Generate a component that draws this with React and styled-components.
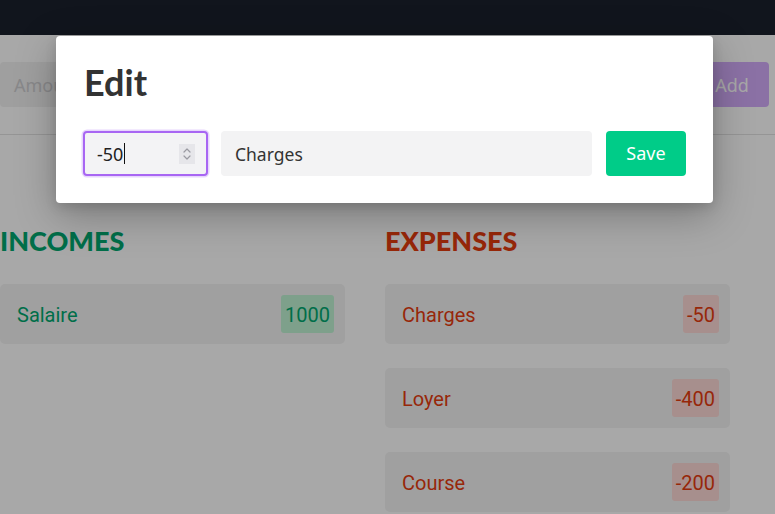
import React from "react";
import styled, { createGlobalStyle } from "styled-components";

const GlobalStyle = createGlobalStyle`
  html, body {
    margin: 0;
    padding: 0;
    background: #ffffff;
    overflow: hidden;
    font-family: "Noto Sans", "Open Sans", sans-serif;
  }
  * { box-sizing: border-box; }
`;

const Page = styled.div`
  width: 775px;
  height: 514px;
  position: relative;
  overflow: hidden;
`;

const Header = styled.header`
  height: 35px;
  background: #1a202c;
`;

const FormBar = styled.div`
  display: flex;
  gap: 13px;
  padding: 27px 6px 27px 0;
  border-bottom: 1px solid #e3e3e3;
`;

const Field = styled.div`
  height: 45px;
  border-radius: 4px;
  background: #f1f1f1;
  display: flex;
  align-items: center;
  padding: 0 14px;
  font-size: 18px;
  color: ${(p) => (p.$placeholder ? "#cfcfd2" : "#333")};
  flex: ${(p) => p.$flex || "none"};
  width: ${(p) => p.$width || "auto"};
`;

const AddButton = styled.button`
  height: 45px;
  width: 74px;
  border: none;
  border-radius: 4px;
  background: #d3acfb;
  color: #ffffff;
  font-family: "Noto Sans", sans-serif;
  font-size: 18px;
  padding: 0;
`;

const Columns = styled.div`
  display: grid;
  grid-template-columns: 345px 345px;
  column-gap: 40px;
  padding-top: 90px;
`;

const Column = styled.section`
  display: flex;
  flex-direction: column;
`;

const Heading = styled.h2`
  margin: 0 0 27px;
  font-family: Lato, sans-serif;
  font-weight: 900;
  font-size: 27px;
  line-height: 32px;
  color: ${(p) => p.$color};
`;

const List = styled.div`
  display: flex;
  flex-direction: column;
  gap: 24px;
`;

const Card = styled.div`
  height: 60px;
  border-radius: 5px;
  background: #f3f3f3;
  display: flex;
  align-items: center;
  justify-content: space-between;
  padding: 2px 11px 0 17px;
  font-family: Roboto, sans-serif;
  font-size: 20px;
  color: ${(p) => p.$color};
`;

const Badge = styled.span`
  height: 38px;
  margin-top: -2px;
  padding: 2px 4px 0;
  border-radius: 3px;
  display: flex;
  align-items: center;
  background: ${(p) => p.$bg};
`;

const Overlay = styled.div`
  position: absolute;
  inset: 0;
  background: rgba(0, 0, 0, 0.34);
  display: flex;
  align-items: flex-start;
  padding: 36px 0 0 56px;
`;

const Modal = styled.div`
  width: 657px;
  background: #ffffff;
  border-radius: 4px;
  padding: 25px 27px 27px 28px;
  box-shadow: 0 12px 40px rgba(0, 0, 0, 0.28), 0 4px 12px rgba(0, 0, 0, 0.12);
`;

const Title = styled.h1`
  margin: 0 0 27px;
  font-family: Lato, sans-serif;
  font-weight: 700;
  font-size: 36px;
  line-height: 43px;
  color: #333333;
`;

const Row = styled.div`
  display: flex;
  align-items: center;
  gap: 13px;
`;

const NumberBox = styled.div`
  width: 125px;
  height: 45px;
  margin-left: -1px;
  border: 2px solid #a866f3;
  box-shadow: 0 0 0 1.5px #e7d6fd;
  border-radius: 4px;
  background: #f3f3f5;
  display: flex;
  align-items: center;
  padding: 0 11px 0 12px;
  font-size: 18px;
  color: #222;
`;

const Caret = styled.span`
  width: 1px;
  height: 21px;
  background: #111;
  margin-left: 1px;
`;

const Spinner = styled.span`
  margin-left: auto;
  width: 16px;
  height: 20px;
  background: #e6e6ea;
  display: flex;
  align-items: center;
  justify-content: center;
`;

const TextBox = styled.div`
  flex: 1;
  height: 45px;
  border-radius: 4px;
  background: #f3f3f4;
  display: flex;
  align-items: center;
  padding: 0 14px;
  font-size: 17.5px;
  color: #333;
`;

const SaveButton = styled.button`
  width: 80px;
  height: 45px;
  border: none;
  border-radius: 4px;
  background: #00cc88;
  color: #ffffff;
  font-family: "Noto Sans", sans-serif;
  font-size: 18px;
  padding: 0 0 2px;
  margin-left: 1px;
`;

const incomes = [{ label: "Salaire", amount: 1000 }];
const expenses = [
  { label: "Charges", amount: -50 },
  { label: "Loyer", amount: -400 },
  { label: "Course", amount: -200 },
];

const GREEN = "#00a870";
const RED = "#e63c0f";

export default function App() {
  return (
    <>
      <GlobalStyle />
      <Page>
        <Header />
        <FormBar>
          <Field $placeholder $width="160px">Amount</Field>
          <Field $placeholder $flex="1">Label</Field>
          <AddButton>Add</AddButton>
        </FormBar>
        <Columns>
          <Column>
            <Heading $color={GREEN}>INCOMES</Heading>
            <List>
              {incomes.map((i) => (
                <Card key={i.label} $color={GREEN}>
                  {i.label}
                  <Badge $bg="#bff3d3">{i.amount}</Badge>
                </Card>
              ))}
            </List>
          </Column>
          <Column>
            <Heading $color={RED}>EXPENSES</Heading>
            <List>
              {expenses.map((e) => (
                <Card key={e.label} $color={RED}>
                  {e.label}
                  <Badge $bg="#fdd9d6">{e.amount}</Badge>
                </Card>
              ))}
            </List>
          </Column>
        </Columns>
        <Overlay>
          <Modal>
            <Title>Edit</Title>
            <Row>
              <NumberBox>
                -50
                <Caret />
                <Spinner>
                  <svg width="10" height="16" viewBox="0 0 10 16" fill="none" stroke="#9a9aa2" strokeWidth="1.2" strokeLinecap="round" strokeLinejoin="round">
                    <polyline points="2,6 5,3 8,6" />
                    <polyline points="2,10 5,13 8,10" />
                  </svg>
                </Spinner>
              </NumberBox>
              <TextBox>Charges</TextBox>
              <SaveButton>Save</SaveButton>
            </Row>
          </Modal>
        </Overlay>
      </Page>
    </>
  );
}
